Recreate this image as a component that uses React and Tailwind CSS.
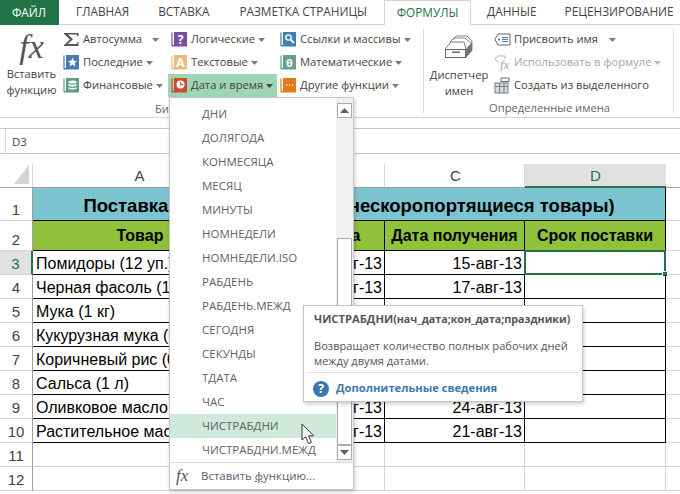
import React from "react";

const ui = "font-['Open_Sans',sans-serif]";

function Book({ color, children }) {
  return (
    <svg width="17" height="17" viewBox="0 0 17 17" className="shrink-0">
      <path d="M1 1.5V14.5H3" fill="none" stroke={color} strokeWidth="1.2" />
      <rect x="3" y="1" width="13" height="14" fill={color} />
      <path d="M1 15.5H16" stroke={color} strokeOpacity="0.5" strokeWidth="1" />
      {children}
    </svg>
  );
}

function Caret({ gap = "ml-1", color = "#6a6a6a" }) {
  return (
    <svg width="7" height="4" viewBox="0 0 7 4" className={`${gap} shrink-0`}>
      <path d="M0 0H7L3.5 4Z" fill={color} />
    </svg>
  );
}

const IconSum = () => (
  <svg width="17" height="17" viewBox="0 0 17 17" className="shrink-0">
    <path d="M1 2H15.5V5.5H14.6L13.8 3.6H5L10 8.2L4.6 13H13.8L14.6 11H15.5V15H1V14L7 8.4L1 3Z" fill="#555" />
  </svg>
);
const IconStar = () => (
  <Book color="#4a7ab5">
    <path d="M9.5 3.5L10.8 6.7L14 7L11.6 9.1L12.4 12.4L9.5 10.6L6.6 12.4L7.4 9.1L5 7L8.2 6.7Z" fill="#fff" />
  </Book>
);
const IconDb = () => (
  <Book color="#5f9e85">
    <ellipse cx="9.5" cy="5" rx="4" ry="1.6" fill="#fff" />
    <path d="M5.5 6.8C6.5 8.2 12.5 8.2 13.5 6.8V8.6C12.5 10 6.5 10 5.5 8.6ZM5.5 10C6.5 11.4 12.5 11.4 13.5 10V11.6C12.5 13 6.5 13 5.5 11.6Z" fill="#fff" />
  </Book>
);
const Letter = ({ children, size = 12, family = "Open Sans" }) => (
  <text x="9.5" y="12.5" textAnchor="middle" fontSize={size} fontWeight="700" fontFamily={family} fill="#fff">
    {children}
  </text>
);
const IconQ = () => (
  <Book color="#7a4fa3">
    <Letter>?</Letter>
  </Book>
);
const IconA = () => (
  <Book color="#e6bd7f">
    <Letter>A</Letter>
  </Book>
);
const IconClock = () => (
  <Book color="#d2492a">
    <circle cx="9.5" cy="7.5" r="4" fill="#fff" />
    <path d="M9.5 5V7.7H11.8" fill="none" stroke="#d2492a" strokeWidth="1.2" />
  </Book>
);
const IconSearch = () => (
  <Book color="#3f7fb3">
    <circle cx="8.5" cy="6.5" r="2.6" fill="none" stroke="#fff" strokeWidth="1.4" />
    <path d="M10.5 8.5L14 12" stroke="#fff" strokeWidth="1.8" />
  </Book>
);
const IconTheta = () => (
  <Book color="#65a08f">
    <Letter size={11}>θ</Letter>
  </Book>
);
const IconDots = () => (
  <Book color="#e47a16">
    <path d="M6 8H7.2M9 8H10.2M12 8H13.2" stroke="#fff" strokeWidth="1.3" />
  </Book>
);

const FxGlyph = ({ className }) => (
  <span className={`font-['Liberation_Serif',serif] italic ${className}`}>fx</span>
);

function RibbonItem({ icon, label, caret = "ml-[3px]", active, pad = "pl-[3px]" }) {
  return (
    <div className={`flex h-[23px] items-center ${pad} ${active ? "bg-[#9fd5b7]" : ""}`}>
      {icon}
      <span className="ml-[3px] whitespace-nowrap">{label}</span>
      <Caret gap={caret} color={active ? "#444" : "#7a7a7a"} />
    </div>
  );
}

function Tabs() {
  return (
    <div className="flex h-[25px] border-b border-[#d4d4d4] text-[11.8px] text-[#444]">
      <div className="flex h-[25px] w-[59px] items-center justify-center bg-[#217346] pr-[1px] text-white">ФАЙЛ</div>
      <div className="ml-[17px] flex items-center">ГЛАВНАЯ</div>
      <div className="ml-[29px] flex items-center">ВСТАВКА</div>
      <div className="ml-[30px] flex items-center whitespace-nowrap">РАЗМЕТКА СТРАНИЦЫ</div>
      <div className="ml-[17px] flex h-[25px] w-[87px] items-center justify-center border border-b-0 border-[#d4d4d4] bg-white text-[#217346]">
        ФОРМУЛЫ
      </div>
      <div className="ml-[16px] flex items-center">ДАННЫЕ</div>
      <div className="ml-[28px] flex items-center whitespace-nowrap">РЕЦЕНЗИРОВАНИЕ</div>
    </div>
  );
}

function Ribbon() {
  return (
    <div className="flex h-[93px] border-b border-[#d4d4d4] text-[11.2px] text-[#444]">
      <div className="flex w-[63px] flex-col items-center pt-[4px] leading-[16px]">
        <FxGlyph className="mb-[1px] text-[34px] leading-[36px] text-[#555]" />
        <span>Вставить</span>
        <span>функцию</span>
      </div>
      <div className="flex w-[105px] flex-col pt-[3px]">
        <RibbonItem icon={<IconSum />} label="Автосумма" caret="ml-[10px]" pad="pl-0" />
        <RibbonItem icon={<IconStar />} label="Последние" pad="pl-0" />
        <RibbonItem icon={<IconDb />} label="Финансовые" pad="pl-0" />
      </div>
      <div className="flex w-[109px] flex-col pt-[3px]">
        <RibbonItem icon={<IconQ />} label="Логические" />
        <RibbonItem icon={<IconA />} label="Текстовые" />
        <RibbonItem icon={<IconClock />} label="Дата и время" active />
      </div>
      <div className="flex w-[146px] flex-col pt-[3px]">
        <RibbonItem icon={<IconSearch />} label="Ссылки и массивы" />
        <RibbonItem icon={<IconTheta />} label="Математические" />
        <RibbonItem icon={<IconDots />} label="Другие функции" />
      </div>
      <div className="my-[4px] w-px bg-[#d9d9d9]" />
      <div className="flex w-[249px] flex-col">
        <div className="flex flex-1">
          <div className="flex w-[70px] flex-col items-center pt-[10px] leading-[16px]">
            <svg width="30" height="24" viewBox="0 0 30 24" className="mb-[8px]">
              <path d="M6 7L10 3H21L27 8M9 5L12 1H23L28 6V15" fill="none" stroke="#888" strokeWidth="1" />
              <path d="M1 14L7 7H20L22 14" fill="#fff" stroke="#777" strokeWidth="1" />
              <rect x="1.5" y="14.5" width="20" height="8" fill="#fff" stroke="#666" />
              <rect x="8" y="16.5" width="8" height="1.5" fill="#666" />
              <path d="M22 14L28 7V16L22 23Z" fill="#777" />
            </svg>
            <span>Диспетчер</span>
            <span>имен</span>
          </div>
          <div className="flex flex-col pt-[3px]">
            <div className="flex h-[23px] items-center">
              <svg width="17" height="13" viewBox="0 0 17 13" className="shrink-0">
                <path d="M4 1H16V12H4L1 6.5Z" fill="none" stroke="#666" />
                <circle cx="5" cy="6.5" r="1" fill="#666" />
                <path d="M8 4.5H14M8 6.5H14M8 8.5H14" stroke="#3f7fb3" />
              </svg>
              <span className="ml-[3px] whitespace-nowrap">Присвоить имя</span>
              <Caret gap="ml-[11px]" color="#7a7a7a" />
            </div>
            <div className="flex h-[23px] items-center text-[#a6a6a6]">
              <svg width="17" height="17" viewBox="0 0 17 17" className="shrink-0">
                <path d="M4 2H11V5M4 2L1 5L4 8" fill="none" stroke="#b5b5b5" />
                <text x="6" y="15" fontSize="13" fontStyle="italic" fontFamily="Liberation Serif" fill="#a6a6a6">fx</text>
              </svg>
              <span className="ml-[3px] whitespace-nowrap">Использовать в формуле</span>
              <Caret gap="ml-[3px]" color="#bdbdbd" />
            </div>
            <div className="flex h-[23px] items-center">
              <svg width="17" height="17" viewBox="0 0 17 17" className="shrink-0">
                <rect x="1" y="6" width="13" height="10" fill="#cfdbe8" stroke="#7d7d7d" />
                <path d="M1 9.5H14M5.5 6V16M10 6V16" stroke="#7d7d7d" />
                <path d="M7 5V1H15V4.5H8Z" fill="#fff" stroke="#666" />
              </svg>
              <span className="ml-[3px] whitespace-nowrap">Создать из выделенного</span>
            </div>
          </div>
        </div>
        <div className="ml-[65px] whitespace-nowrap text-[#666]">Определенные имена</div>
      </div>
      <div className="my-[4px] w-px bg-[#d9d9d9]" />
    </div>
  );
}

function FormulaBar() {
  return (
    <div className="mt-[10px] flex h-[26px] items-center border-y border-[#c6c6c6] pl-[5px] text-[11.5px] text-[#444]">
      <div className="flex h-full w-[160px] items-center border-l border-[#d4d4d4] pt-[1px] pl-[6px]">D3</div>
    </div>
  );
}

const xl = "font-['Liberation_Sans',Arial,sans-serif]";
const rows = [
  ["Помидоры (12 уп.)", "13-авг-13", "15-авг-13"],
  ["Черная фасоль (1 кг)", "15-авг-13", "17-авг-13"],
  ["Мука (1 кг)", "", ""],
  ["Кукурузная мука (0,5 кг)", "", ""],
  ["Коричневый рис (0,5 кг)", "", ""],
  ["Сальса (1 л)", "", ""],
  ["Оливковое масло (0,5 л)", "21-авг-13", "24-авг-13"],
  ["Растительное масло (1 л)", "19-авг-13", "21-авг-13"],
];

function RowHead({ n, h, active }) {
  return (
    <div
      style={{ height: h }}
      className={`flex w-[33px] shrink-0 items-end justify-center border-b border-[#d4d4d4] text-[15px] leading-[20px] ${
        active ? "border-r-2 border-r-[#217346] bg-[#e1e1e1] text-[#217346]" : "border-r border-r-[#9f9f9f] text-[#444]"
      }`}
    >
      {n}
    </div>
  );
}

function Sheet() {
  const colHead = "flex items-center justify-center border-r border-[#d4d4d4] pt-[2px] pl-[2px] text-[15px] text-[#444]";
  return (
    <div className={`${xl} mt-[10px]`}>
      <div className="flex h-[24px] border-b border-[#9f9f9f]">
        <div className="flex w-[33px] items-end justify-end border-r border-[#d4d4d4] p-[3px]">
          <div className="h-0 w-0 border-b-[19px] border-l-[15px] border-b-[#d4d4d4] border-l-transparent" />
        </div>
        <div className={`${colHead} w-[212px]`}>A</div>
        <div className={`${colHead} w-[140px]`}>B</div>
        <div className={`${colHead} w-[140px]`}>C</div>
        <div className="-mb-px flex w-[141px] items-center justify-center border-b-2 border-[#217346] bg-[#e1e1e1] pt-[2px] text-[15px] text-[#217346]">
          D
        </div>
      </div>
      <div className="flex">
        <RowHead n="1" h={33} />
        <div className="flex h-[33px] w-[633px] items-center justify-center border-r border-b border-black bg-[#7cc5d0] pt-[3px] text-[18.5px] font-bold whitespace-nowrap text-black">
          Поставка продуктов в кафе (нескоропортящиеся товары)
        </div>
        <div className="h-[33px] flex-1 border-b border-[#d4d4d4]" />
      </div>
      <div className="flex">
        <RowHead n="2" h={30} />
        {[["Товар", "w-[212px] pl-[3px]"], ["Дата заказа", "w-[140px]"], ["Дата получения", "w-[140px]"], ["Срок поставки", "w-[141px]"]].map(([t, w]) => (
          <div key={t} className={`flex h-[30px] ${w} items-center justify-center border-r border-b border-black bg-[#8fc13b] text-[16px] font-bold whitespace-nowrap text-black`}>
            {t}
          </div>
        ))}
        <div className="h-[30px] flex-1 border-b border-[#d4d4d4]" />
      </div>
      {rows.map((r, i) => (
        <div className="flex" key={i}>
          <RowHead n={i + 3} h={24} active={i === 0} />
          <div className="flex h-[24px] w-[212px] items-center overflow-hidden border-r border-b border-black pt-[3px] pl-[3px] text-[16px] whitespace-nowrap text-black">
            {r[0]}
          </div>
          <div className="flex h-[24px] w-[140px] items-center justify-end border-r border-b border-black pt-[3px] pr-[2px] text-[16px] text-black">{r[1]}</div>
          <div className="flex h-[24px] w-[140px] items-center justify-end border-r border-b border-black pt-[3px] pr-[2px] text-[16px] text-black">{r[2]}</div>
          <div className="relative h-[24px] w-[141px] border-r border-b border-black">
            {i === 0 && (
              <>
                <div className="absolute -top-[1px] -right-[1px] -bottom-[1px] -left-[1px] border-2 border-[#217346]" />
                <div className="absolute -right-[3px] -bottom-[3px] h-[6px] w-[6px] border border-white bg-[#217346]" />
              </>
            )}
          </div>
          <div className="h-[24px] flex-1 border-b border-[#d4d4d4]" />
        </div>
      ))}
      {[11, 12].map((n) => (
        <div className="flex" key={n}>
          <RowHead n={n} h={24} />
          {["w-[212px]", "w-[140px]", "w-[140px]", "w-[141px]"].map((w, i) => (
            <div key={i} className={`h-[24px] ${w} border-r border-b border-[#d4d4d4]`} />
          ))}
          <div className="h-[24px] flex-1 border-b border-[#d4d4d4]" />
        </div>
      ))}
    </div>
  );
}

const items = ["ДНИ", "ДОЛЯГОДА", "КОНМЕСЯЦА", "МЕСЯЦ", "МИНУТЫ", "НОМНЕДЕЛИ", "НОМНЕДЕЛИ.ISO", "РАБДЕНЬ", "РАБДЕНЬ.МЕЖД", "СЕГОДНЯ", "СЕКУНДЫ", "ТДАТА", "ЧАС", "ЧИСТРАБДНИ", "ЧИСТРАБДНИ.МЕЖД"];

function Menu() {
  return (
    <div className={`${ui} absolute top-[97px] left-[169px] flex h-[393px] w-[185px] flex-col border border-[#c6c6c6] bg-white text-[11.5px] text-[#5f5f6a] shadow-[1px_2px_4px_rgba(0,0,0,0.2)]`}>
      <div className="flex h-[364px]">
        <div className="flex flex-1 flex-col pt-[4px]">
          {items.map((t) => (
            <div key={t} className={`flex h-[24px] items-center pl-[32px] whitespace-nowrap ${t === "ЧИСТРАБДНИ" ? "bg-[#cfeadb]" : ""}`}>
              {t}
            </div>
          ))}
        </div>
        <div className="flex w-[17px] flex-col bg-[#f0f0f0] px-px pt-[5px] pb-[2px]">
          <div className="flex h-[15px] items-center justify-center border border-[#ababab] bg-white">
            <svg width="9" height="5" viewBox="0 0 9 5"><path d="M0 5H9L4.5 0Z" fill="#606060" /></svg>
          </div>
          <div className="mt-[120px] flex-1 border border-[#ababab] bg-white" />
          <div className="flex h-[15px] items-center justify-center border border-[#ababab] bg-white">
            <svg width="9" height="5" viewBox="0 0 9 5"><path d="M0 0H9L4.5 5Z" fill="#606060" /></svg>
          </div>
        </div>
      </div>
      <div className="flex flex-1 items-center border-t border-[#d9d9d9]">
        <FxGlyph className="ml-[6px] w-[25px] text-[17px] text-[#555]" />
        <span>
          Вставить <span className="underline">ф</span>ункцию...
        </span>
      </div>
    </div>
  );
}

function Tooltip() {
  return (
    <div className={`${ui} absolute top-[305px] left-[303px] w-[280px] border border-[#c6c6c6] bg-white px-[4px] text-[#555] shadow-[1px_2px_4px_rgba(0,0,0,0.2)]`}>
      <div className="whitespace-nowrap px-[6px] pt-[5px] text-[10.7px] leading-[16px] font-bold">
        <span className="text-[11.2px]">ЧИСТРАБДНИ</span>(нач_дата;кон_дата;праздники)
      </div>
      <div className="px-[6px] pt-[11px] pb-[4px] text-[11.1px] leading-[15px]">
        Возвращает количество полных рабочих дней между двумя датами.
      </div>
      <div className="flex h-[29px] items-center border-t border-[#e1e1e1] pt-[3px] pl-[5px] text-[11.2px] font-bold text-[#3f77ac]">
        <div className="flex h-[16px] w-[16px] items-center justify-center rounded-full bg-[#3f77ac] text-[12px] text-white">?</div>
        <span className="ml-[7px] whitespace-nowrap">Дополнительные сведения</span>
      </div>
    </div>
  );
}

function Pointer() {
  return (
    <svg width="16" height="23" viewBox="0 0 16 23" className="absolute top-[423px] left-[301px]">
      <path d="M1 1V17L4.6 13.8L7.6 20.6L10.4 19.4L7.5 12.8H12.5Z" fill="#fff" stroke="#333" strokeWidth="1" />
    </svg>
  );
}

export default function App() {
  return (
    <div className="relative h-[494px] w-[680px] overflow-hidden bg-white">
      <div className={ui}>
        <Tabs />
        <Ribbon />
        <FormulaBar />
      </div>
      <Sheet />
      <div className={`${ui} absolute top-[101px] left-[155px] text-[11.2px] text-[#666]`}>Би</div>
      <Menu />
      <Tooltip />
      <Pointer />
    </div>
  );
}
